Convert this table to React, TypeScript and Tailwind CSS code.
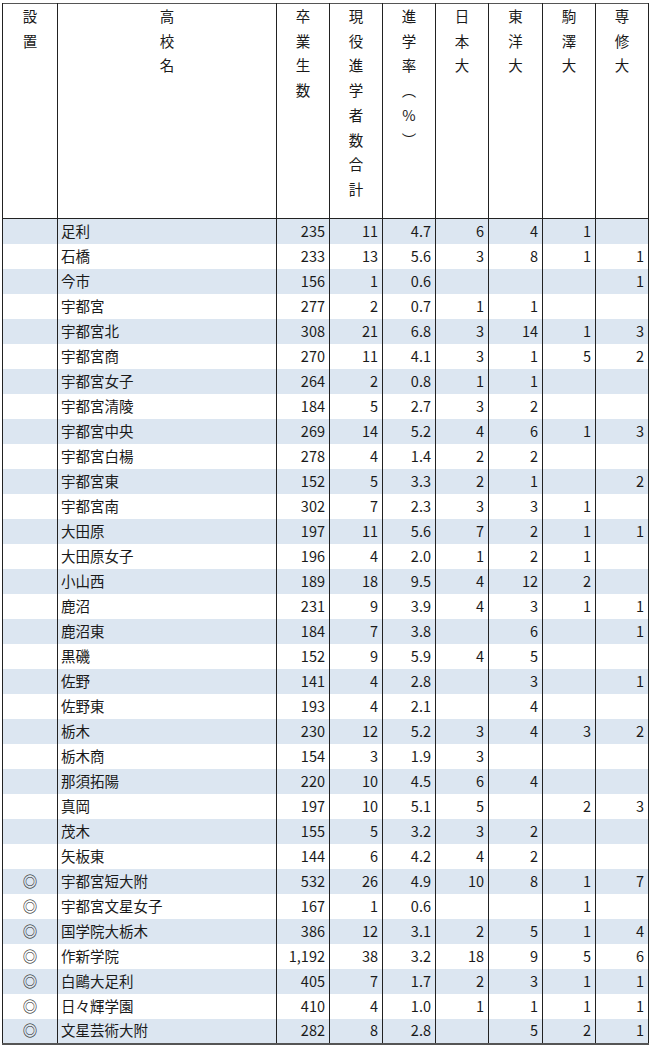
type Row = [string, string, string, string, string, string, string, string, string]

const ROWS: Row[] = [
  ["", "足利", "235", "11", "4.7", "6", "4", "1", ""],
  ["", "石橋", "233", "13", "5.6", "3", "8", "1", "1"],
  ["", "今市", "156", "1", "0.6", "", "", "", "1"],
  ["", "宇都宮", "277", "2", "0.7", "1", "1", "", ""],
  ["", "宇都宮北", "308", "21", "6.8", "3", "14", "1", "3"],
  ["", "宇都宮商", "270", "11", "4.1", "3", "1", "5", "2"],
  ["", "宇都宮女子", "264", "2", "0.8", "1", "1", "", ""],
  ["", "宇都宮清陵", "184", "5", "2.7", "3", "2", "", ""],
  ["", "宇都宮中央", "269", "14", "5.2", "4", "6", "1", "3"],
  ["", "宇都宮白楊", "278", "4", "1.4", "2", "2", "", ""],
  ["", "宇都宮東", "152", "5", "3.3", "2", "1", "", "2"],
  ["", "宇都宮南", "302", "7", "2.3", "3", "3", "1", ""],
  ["", "大田原", "197", "11", "5.6", "7", "2", "1", "1"],
  ["", "大田原女子", "196", "4", "2.0", "1", "2", "1", ""],
  ["", "小山西", "189", "18", "9.5", "4", "12", "2", ""],
  ["", "鹿沼", "231", "9", "3.9", "4", "3", "1", "1"],
  ["", "鹿沼東", "184", "7", "3.8", "", "6", "", "1"],
  ["", "黒磯", "152", "9", "5.9", "4", "5", "", ""],
  ["", "佐野", "141", "4", "2.8", "", "3", "", "1"],
  ["", "佐野東", "193", "4", "2.1", "", "4", "", ""],
  ["", "栃木", "230", "12", "5.2", "3", "4", "3", "2"],
  ["", "栃木商", "154", "3", "1.9", "3", "", "", ""],
  ["", "那須拓陽", "220", "10", "4.5", "6", "4", "", ""],
  ["", "真岡", "197", "10", "5.1", "5", "", "2", "3"],
  ["", "茂木", "155", "5", "3.2", "3", "2", "", ""],
  ["", "矢板東", "144", "6", "4.2", "4", "2", "", ""],
  ["◎", "宇都宮短大附", "532", "26", "4.9", "10", "8", "1", "7"],
  ["◎", "宇都宮文星女子", "167", "1", "0.6", "", "", "1", ""],
  ["◎", "国学院大栃木", "386", "12", "3.1", "2", "5", "1", "4"],
  ["◎", "作新学院", "1,192", "38", "3.2", "18", "9", "5", "6"],
  ["◎", "白鷗大足利", "405", "7", "1.7", "2", "3", "1", "1"],
  ["◎", "日々輝学園", "410", "4", "1.0", "1", "1", "1", "1"],
  ["◎", "文星芸術大附", "282", "8", "2.8", "", "5", "2", "1"],
]

const HEADERS: string[][] = [
  ["設", "置"],
  ["高", "校", "名"],
  ["卒", "業", "生", "数"],
  ["現", "役", "進", "学", "者", "数", "合", "計"],
  ["進", "学", "率", "︵", "%", "︶"],
  ["日", "本", "大"],
  ["東", "洋", "大"],
  ["駒", "澤", "大"],
  ["専", "修", "大"],
]

const WIDTHS = ["w-[55px]", "w-[219px]", "w-[53px]", "w-[53px]", "w-[53px]", "w-[53px]", "w-[54px]", "w-[53px]", "w-[53px]"]

export default function App() {
  return (
    <div className="bg-white w-[650px] h-[1047px] pt-[3px] pl-[2px] text-[#1a1a1a] font-['Noto_Sans_CJK_JP',sans-serif]">
      <table className="border-collapse table-fixed w-[647px] border border-[#555] border-b-2 text-[14.5px]">
        <colgroup>
          {WIDTHS.map((w, i) => <col key={i} className={w} />)}
        </colgroup>
        <thead>
          <tr className="h-[215px]">
            {HEADERS.map((chars, i) => (
              <th key={i} className="border-x border-b border-[#222] align-top font-normal pt-0">
                <div className="flex flex-col items-center leading-[24.7px]">
                  {chars.map((c, j) => <span key={j}>{c}</span>)}
                </div>
              </th>
            ))}
          </tr>
        </thead>
        <tbody>
          {ROWS.map((r, i) => (
            <tr key={i} className={i % 2 === 0 ? "h-[25px] bg-[#dce6f1]" : "h-[25px] bg-white"}>
              <td className="border-x border-[#222] text-center leading-none">{r[0]}</td>
              <td className="border-x border-[#222] pl-[3px] leading-none">{r[1]}</td>
              {r.slice(2).map((v, j) => (
                <td key={j} className="border-x border-[#222] text-right pr-[4px] leading-none">{v}</td>
              ))}
            </tr>
          ))}
        </tbody>
      </table>
    </div>
  )
}
